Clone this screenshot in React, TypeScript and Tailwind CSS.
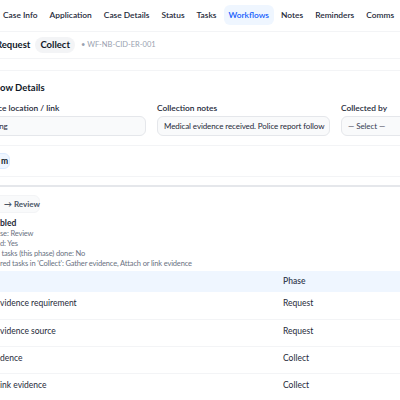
const tabs = ['Case Info', 'Application', 'Case Details', 'Status', 'Tasks', 'Workflows', 'Notes', 'Reminders', 'Comms'];

const rows = [
  { task: 'vidence requirement', phase: 'Request' },
  { task: 'vidence source', phase: 'Request' },
  { task: 'dence', phase: 'Collect' },
  { task: 'ink evidence', phase: 'Collect' },
];

export default function App() {
  return (
    <div className="w-[400px] h-[400px] overflow-hidden bg-white text-gray-800 font-['Lato',sans-serif]">
      {/* tabs */}
      <nav className="flex items-start gap-[2px] h-[32px] pt-[5px] -ml-[2px] border-b border-gray-100 whitespace-nowrap">
        {tabs.map((t) => (
          <div
            key={t}
            className={
              t === 'Workflows'
                ? 'h-[20px] px-[5px] flex items-center rounded-md bg-blue-50 text-blue-600 text-[8.4px] font-semibold'
                : 'h-[20px] px-[5px] flex items-center rounded-md text-gray-800 text-[8.4px] font-semibold'
            }
          >
            {t}
          </div>
        ))}
      </nav>

      {/* workflow header */}
      <div className="flex items-center h-[27px] border-b border-gray-100 whitespace-nowrap">
        <span className="-ml-[4px] text-[9.5px] font-bold text-gray-900">Request</span>
        <span className="ml-[5px] h-[16px] px-[5px] flex items-center rounded-full bg-gray-100 text-[9.5px] font-bold text-gray-900">Collect</span>
        <span className="ml-[6px] text-[7.5px] text-gray-400">• WF-NB-CID-ER-001</span>
      </div>

      {/* details card */}
      <div className="mt-[11px] border-t border-b border-gray-100">
        <div className="pt-[11px] text-[9.5px] font-bold text-gray-900 leading-[12px]">ow Details</div>
        <div className="mt-[8px] -ml-[27px] w-[541px] grid grid-cols-3 gap-x-[11px] pb-[9px] border-b border-gray-100">
          {[
            { label: 'Evidence location / link', value: 'Pending', cls: 'text-gray-800' },
            { label: 'Collection notes', value: 'Medical evidence received. Police report follow', cls: 'text-gray-800' },
            { label: 'Collected by', value: '— Select —', cls: 'text-gray-700' },
          ].map((f) => (
            <div key={f.label} className="flex flex-col">
              <label className="text-[8.4px] font-semibold text-gray-800 leading-[12px] whitespace-nowrap">{f.label}</label>
              <div className="mt-[2px] h-[20px] px-[6px] flex items-center rounded-md border border-gray-200 bg-gray-50 text-[8px] tracking-[-0.1px] whitespace-nowrap overflow-hidden">
                <span className={f.cls}>{f.value}</span>
              </div>
            </div>
          ))}
        </div>
        <div className="py-[7px]">
          <div className="-ml-[6px] w-[16px] h-[16px] pl-[6px] flex items-center rounded-md bg-blue-50 border border-blue-100 text-[8.5px] font-bold text-gray-900">m</div>
        </div>
      </div>

      {/* transition section */}
      <div className="mt-[8px] border-t-2 border-gray-200 pt-[8px]">
        <div className="-ml-[6px] w-[46px] h-[18px] pl-[9px] flex items-center rounded-md bg-gray-50 border border-gray-100 text-[8px] font-bold text-gray-600 whitespace-nowrap">
          → Review
        </div>
        <div className="mt-[4px] text-[8.5px] font-bold text-gray-800 leading-[12px]">bled</div>
        <div className="text-[7.5px] tracking-[-0.15px] text-gray-500 leading-[10px] whitespace-nowrap">
          <div>se: Review</div>
          <div>d: Yes</div>
          <div className="-ml-[2px]">l tasks (this phase) done: No</div>
          <div>red tasks in 'Collect': Gather evidence, Attach or link evidence</div>
        </div>

        <table className="mt-[2px] w-full text-[8.5px] border-collapse">
          <thead>
            <tr className="bg-blue-50 h-[21px]">
              <th className="text-left font-semibold text-gray-700 w-[283px]"></th>
              <th className="text-left font-semibold text-gray-700">Phase</th>
            </tr>
          </thead>
          <tbody>
            {rows.map((r) => (
              <tr key={r.task} className="h-[27.3px] border-b border-gray-100">
                <td className="align-middle pb-[4px] whitespace-nowrap">{r.task}</td>
                <td className="align-middle pb-[4px]">{r.phase}</td>
              </tr>
            ))}
          </tbody>
        </table>
      </div>
    </div>
  );
}
